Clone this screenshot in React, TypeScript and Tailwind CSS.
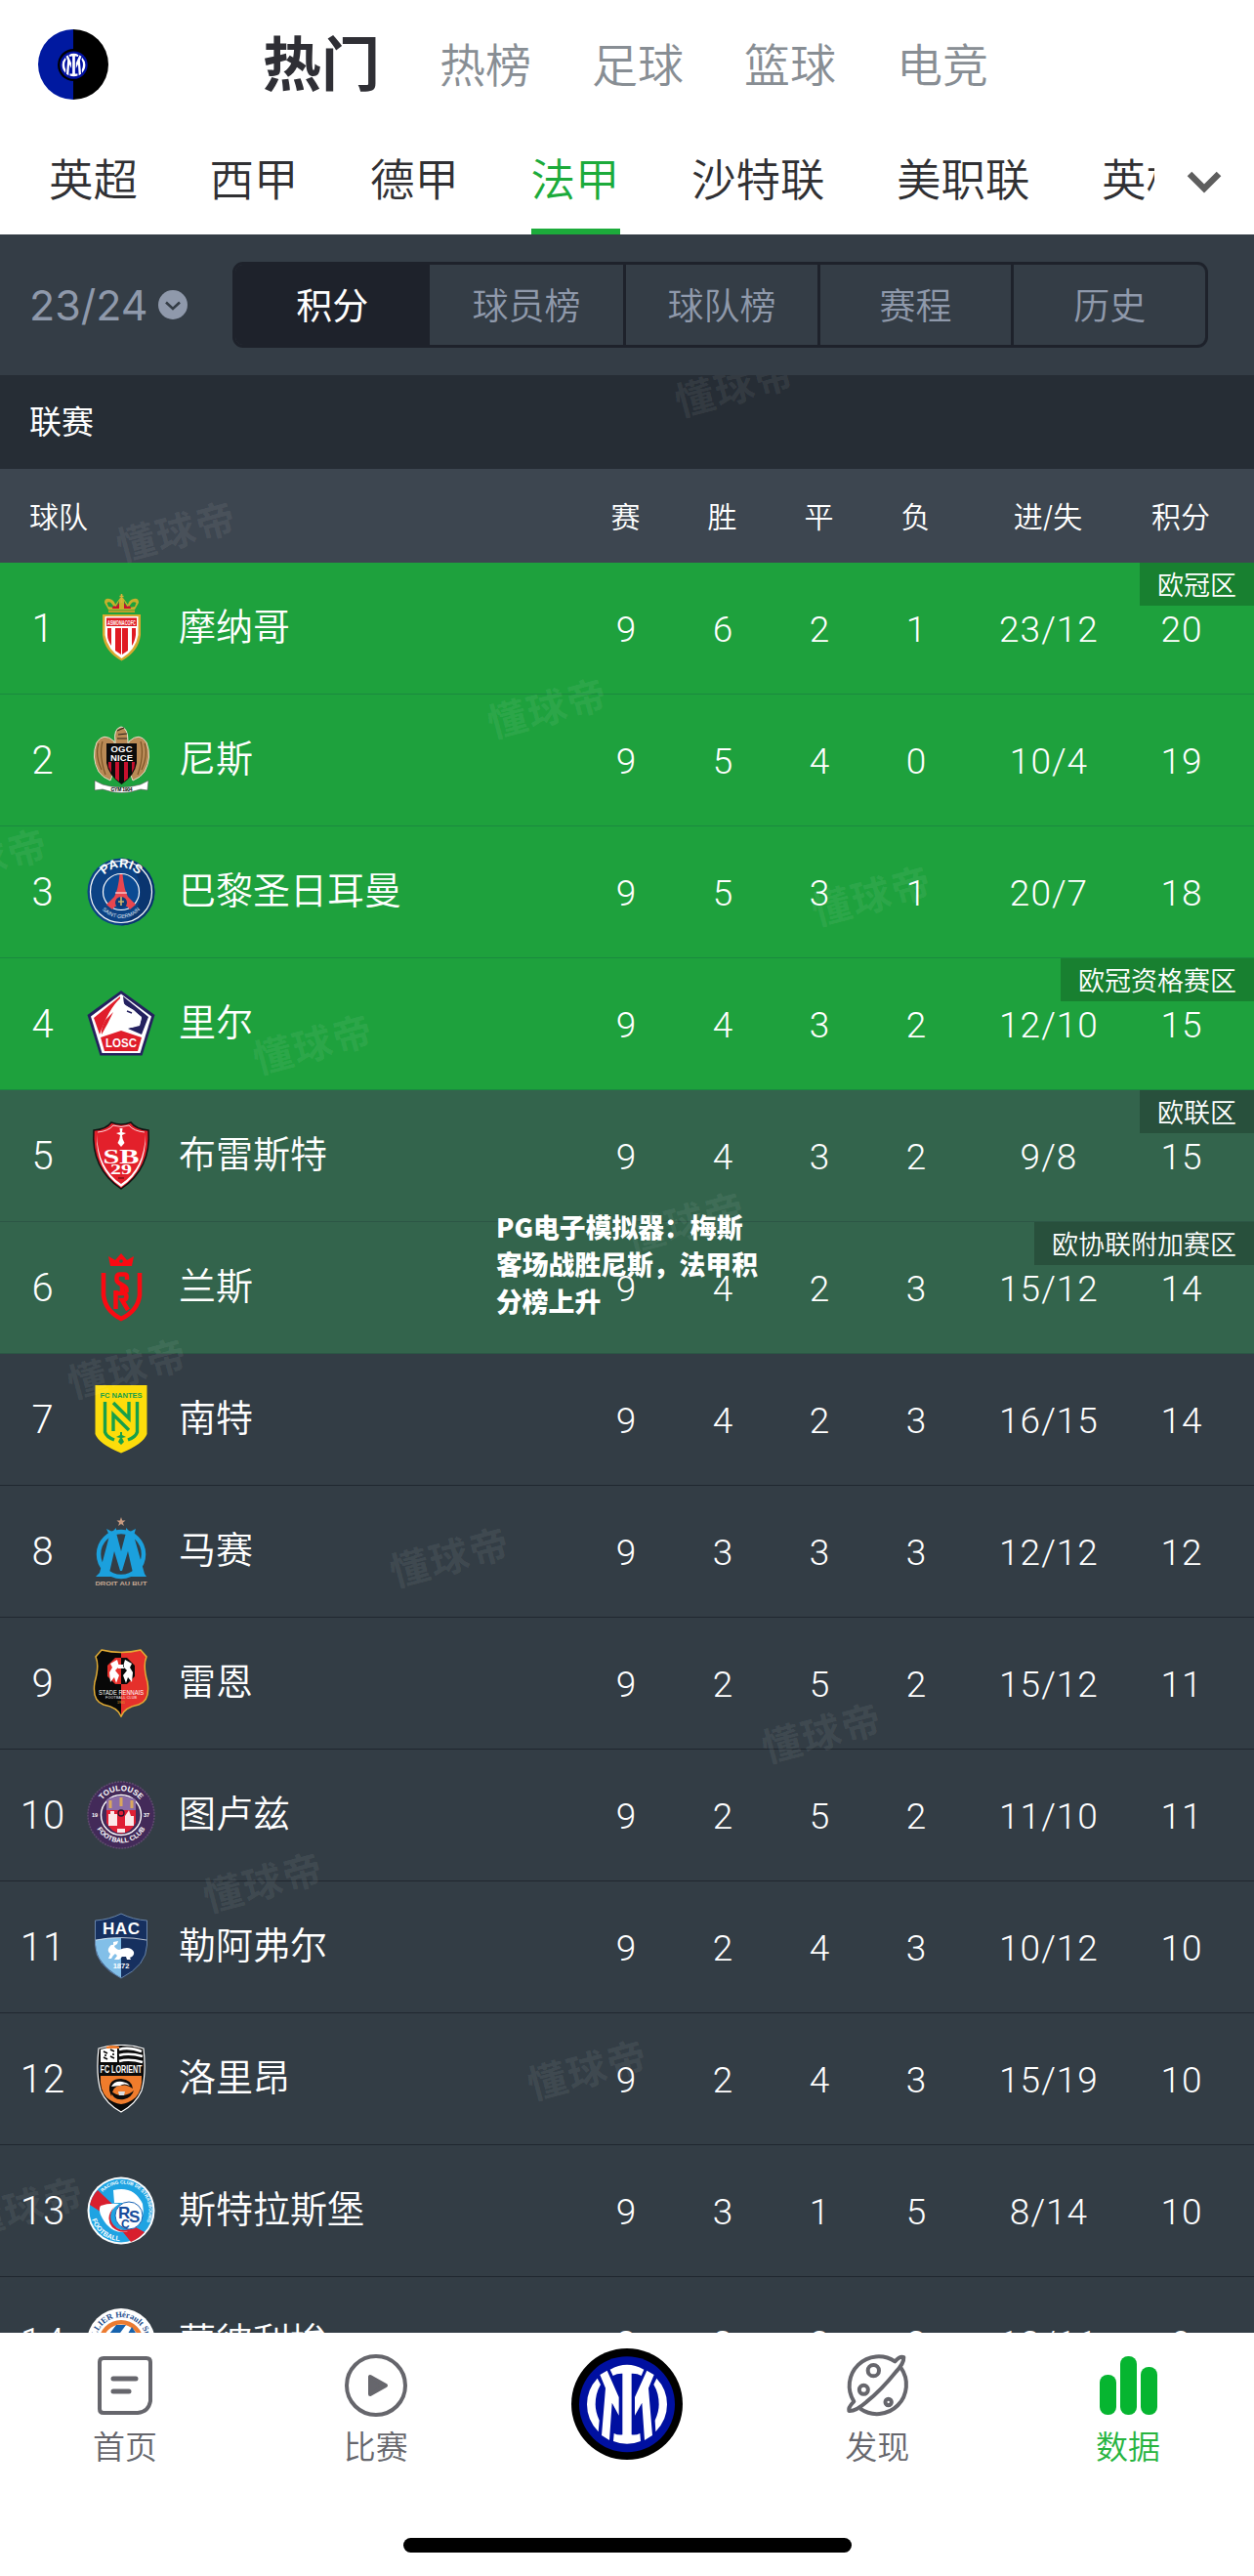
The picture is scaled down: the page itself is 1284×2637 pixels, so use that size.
import type { ReactNode } from "react";

type Team = {
  rank: number;
  name: string;
  stats: string[];
  zone?: string;
  crest: ReactNode;
};

// Inter Milan monogram, shared by the avatar and the tab bar
function InterLogo({ className }: { className?: string }) {
  return (
    <svg viewBox="555 312 342 342" className={className}>
      <circle cx="726" cy="483" r="171" fill="#000" />
      <circle cx="726" cy="484" r="147" fill="#0010a0" />
      <g fill="#fff">
        <path d="M674 377Q726 348 778 377L770 396Q757 388 740 389V577Q754 579 766 573L768 597Q726 614 684 597L686 573Q698 579 712 577V389Q696 388 683 396Z" />
        <path d="M643 393L665 380L701 462V518L680 479L672 594L648 579L660 434Z" />
        <path d="M809 393L787 380L750 462V518L772 479L780 594L804 579L792 434Z" />
        <path d="M635 404Q603 438 603 484Q603 532 638 568L641 533Q629 508 629 484Q629 450 645 423Z" />
        <path d="M817 404Q849 438 849 484Q849 532 814 568L812 533Q824 508 824 484Q824 450 808 423Z" />
      </g>
    </svg>
  );
}

const SANS = "Liberation Sans, sans-serif";

const crests = {
  monaco: (
    <>
      <path d="M22 16L18 9Q18 4 23 5Q28 6 29 11L34 4H37L42 11Q43 6 48 5Q53 4 53 9L49 16Z" fill="#c9b02c" />
      <path d="M22 13L20.500 9Q24 6 28 14ZM29 14L33 7V14ZM38 14V7L42 14ZM43 14Q46 6 50.500 9L49 13Z" fill="#1ea13d" />
      <path d="M26 15Q26 11 30 13L33 9V15ZM45 15Q45 11 41 13L38 9V15Z" fill="#c8102e" />
      <path d="M35.500 0V9M33.500 2.500H37.500" stroke="#d8b23a" strokeWidth="1.600" />
      <path d="M22 16.500H49V19H22Z" fill="#b8a02a" />
      <path d="M16 21H55V42Q53 59 35.500 68.500Q18 59 16 42Z" fill="#d9a92f" />
      <path d="M18.500 23H52.500V42Q50 57 35.500 66Q21 57 18.500 42Z" fill="#fff" />
      <path d="M20 24.500H51V33H20Z" fill="#e01a22" />
      <path d="M21 35H25V53Q21 47 21 42ZM29 35H35V62L29 58ZM36 35H42V58L36 62ZM46 35H50V42Q49 49 46 53Z" fill="#e01a22" />
      <text x="35.500" y="31.500" fontSize="6.500" fontWeight="700" textAnchor="middle" textLength="29" lengthAdjust="spacingAndGlyphs" fill="#fff" fontFamily={SANS}>ASMONACOFC</text>
    </>
  ),
  nice: (
    <>
      <path d="M29 16Q27 3 35 1Q42 2 42 16V20H29Z" fill="#b98a55" stroke="#efe6d8" strokeWidth="1" />
      <path d="M31 5L38 2M32 9L41 8M31 13L41 13" stroke="#2a2118" strokeWidth="1.200" />
      <path d="M28 16Q17 6 10 17Q4 32 12 47Q16 53 24 56L30 40Z" fill="#b98a55" stroke="#e9dcc8" strokeWidth="1" />
      <path d="M43 16Q54 6 61 17Q67 32 59 47Q55 53 47 56L41 40Z" fill="#b98a55" stroke="#e9dcc8" strokeWidth="1" />
      <path d="M12 18Q8 30 15 45M16 16Q12 30 19 50M59 18Q63 30 56 45M55 16Q59 30 52 50" stroke="#7b5427" strokeWidth="1.200" fill="none" />
      <path d="M20 18H51V38Q49 51 35.500 60Q22 51 20 38Z" fill="#0b0b0b" />
      <path d="M22 37H25V48L22 42ZM29 37H33V57L29 54ZM38 37H42V54L38 57ZM46 37H49L48.500 43L46 48Z" fill="#c8102e" />
      <g fill="#fff" fontFamily={SANS} fontWeight="700" textAnchor="middle" fontSize="9.500">
        <text x="35.500" y="27" textLength="22">OGC</text>
        <text x="35.500" y="35.500" textLength="23">NICE</text>
      </g>
      <path d="M8 56L16 60Q35 66 55 60L63 56L62 66L55 65Q35 72 16 65L8 66Z" fill="#fff" stroke="#555" strokeWidth=".6" />
      <text x="35.500" y="67" fontSize="5" fontWeight="700" textAnchor="middle" textLength="22" fontFamily={SANS}>GYM 1904</text>
    </>
  ),
  paris: (
    <>
      <circle cx="35" cy="35" r="34.500" fill="#0c4284" />
      <path d="M35 .5A34.500 34.500 0 0 1 35 69.500A40 40 0 0 0 35 .5Z" fill="#0a356f" />
      <circle cx="35" cy="35" r="31.500" fill="none" stroke="#fff" strokeWidth="1.200" />
      <circle cx="35" cy="35" r="18.500" fill="#0b4a92" stroke="#fff" strokeWidth="1.200" />
      <path d="M33.500 17H36.500Q38 33 42 40L50 48L44 53Q35 42 26 53L20 48L28 40Q32 33 33.500 17Z" fill="#e8464f" />
      <path d="M29 36H41" stroke="#fff" strokeWidth="1" />
      <circle cx="35" cy="46" r="6" fill="#0b3a78" />
      <path d="M35 40V49M32 45H38" stroke="#d3b46a" strokeWidth="1.600" />
      <path id="psg-top" d="M14 23A23.500 23.500 0 0 1 56 23" fill="none" />
      <path id="psg-bottom" d="M12 48A26 26 0 0 0 58 48" fill="none" />
      <text fontSize="13" fontWeight="700" fill="#fff" fontFamily={SANS}>
        <textPath href="#psg-top" startOffset="50%" textAnchor="middle">PARIS</textPath>
      </text>
      <text fontSize="5.500" fill="#dfe7f2" fontFamily={SANS}>
        <textPath href="#psg-bottom" startOffset="50%" textAnchor="middle">SAINT-GERMAIN</textPath>
      </text>
    </>
  ),
  lille: (
    <>
      <path d="M35 1L69.500 26L56.500 67.500H13.500L.5 26Z" fill="#24215f" />
      <path d="M35 4.500L66 27.500L54.500 65H15.500L4 27.500Z" fill="#fff" />
      <path d="M34 7V9Q22 20 13 46L7 29Z" fill="#e01e2b" />
      <path d="M37 7L63 28L56 46L42 40L54 36L56 28L46 20L38 15Z" fill="#24215f" />
      <path d="M35 10L40 17L48 21L56 29L54 37L46 39L36 37L40 42L35 44L18 50Q18 27 35 10Z" fill="#fff" />
      <path d="M19 31Q14 40 15 46Q21 36 27 23Z" fill="#e01e2b" />
      <path d="M41 22L46 24" stroke="#24215f" strokeWidth="1.500" />
      <path d="M35 42L56 49L52 63H18L14 49Z" fill="#e01e2b" />
      <text x="35" y="59" fontSize="12.500" fontWeight="700" fill="#fff" textAnchor="middle" textLength="32" lengthAdjust="spacingAndGlyphs" fontFamily={SANS}>LOSC</text>
    </>
  ),
  brest: (
    <>
      <path d="M7 9Q20 8 25 1Q35 5 45 1Q50 8 63 9Q66 48 35 69Q4 48 7 9Z" fill="#e3202b" stroke="#111" strokeWidth="1.500" />
      <path d="M10 13Q11 48 35 64Q59 48 60 13Q61 50 35 67Q9 50 10 13Z" fill="#fff" />
      <path d="M11 11Q22 10 27 4Q35 7 43 4Q48 10 59 11" fill="none" stroke="#fff" strokeWidth=".8" />
      <path d="M33.500 7H36.500L36 11L40 12L36 14Q36 18 38.500 22L35 26L31.500 22Q34 18 34 14L30 12L34 11Z" fill="#fff" />
      <g fill="#fff" textAnchor="middle" fontFamily="Liberation Serif, serif" fontWeight="700">
        <text x="35" y="43" fontSize="21" textLength="37" lengthAdjust="spacingAndGlyphs">SB</text>
        <text x="35" y="54" fontSize="15" textLength="22" lengthAdjust="spacingAndGlyphs">29</text>
      </g>
      <path d="M32 58H38" stroke="#7d1219" strokeWidth="1.500" />
    </>
  ),
  reims: (
    <>
      <path d="M24 13L22 3L29 7L35 0L41 7L48 3L46 13Z" fill="#fa0a12" />
      <circle cx="35" cy="8" r="1.800" fill="#33644c" />
      <path d="M17 20V43Q19 59 35 67Q52 59 54 43V20" fill="none" stroke="#fa0a12" strokeWidth="4.600" />
      <path d="M41 27V24Q41 21.500 38 21.500H34Q30.500 21.500 30.500 25V27Q30.500 29 33 30.500L38 33.500Q40.500 35 40.500 37V40" fill="none" stroke="#fa0a12" strokeWidth="4.500" />
      <path d="M29.500 57V38M36 33L36 41M31 41H37Q40.500 41 40.500 44.500Q40.500 48 36 48L42 58" fill="none" stroke="#fa0a12" strokeWidth="4.500" />
    </>
  ),
  nantes: (
    <>
      <path d="M8.500 0H61.500V50Q58 60 35 69.500Q12 60 8.500 50Z" fill="#fddc0b" />
      <text x="35" y="13" fontSize="7.500" fontWeight="700" fill="#17a04a" textAnchor="middle" textLength="43" lengthAdjust="spacingAndGlyphs" fontFamily={SANS}>FC NANTES</text>
      <path d="M18.500 17V48Q20 53 28 56M51.500 17V48Q50 53 42 56M27 47V30L43 46M27 18L43 34V17" fill="none" stroke="#17a04a" strokeWidth="3.400" />
      <path d="M34 48H36V51L40 53L36 54L38 58L35 61L32 58L34 54L30 53L34 51Z" fill="#17a04a" />
    </>
  ),
  marseille: (
    <>
      <path d="M35 0L36.200 3.500H39.500L36.900 5.700L37.900 9L35 7L32.100 9L33.100 5.700L30.500 3.500H33.800Z" fill="#c99b80" />
      <circle cx="35" cy="38" r="23" fill="none" stroke="#1ba0dd" strokeWidth="4.500" />
      <path d="M20 12L26 15L30 11V16L35 35L40 16V11L44 15L50 12L48 19L59 58L61 61H44L47 57L42 35L36 55H34L28 35L23 57L26 61H9L13 57L23 19Z" fill="#1ba0dd" />
      <text x="35" y="69.500" fontSize="5.800" fontWeight="700" fill="#c9a994" textAnchor="middle" textLength="53" lengthAdjust="spacingAndGlyphs" fontFamily={SANS}>DROIT AU BUT</text>
    </>
  ),
  rennes: (
    <>
      <path d="M15 1Q35 6 55 1L61 8Q57 17 62 34Q65 53 53 57Q38 60 35 69Q32 60 17 57Q5 53 8 34Q13 17 9 8Z" fill="#080808" />
      <path d="M35 3Q46 3 55 1L61 8Q57 17 62 34Q65 53 53 57Q38 60 35 69Z" fill="#e5302b" />
      <path d="M15 1Q35 6 55 1L61 8Q57 17 62 34Q65 53 53 57Q38 60 35 69Q32 60 17 57Q5 53 8 34Q13 17 9 8Z" fill="none" stroke="#e4ad34" strokeWidth="1.500" />
      <path d="M35 9H29L21 17V28L29 36H35Z" fill="#e5302b" />
      <path d="M35 9H41L49 17V28L41 36H35Z" fill="#080808" />
      <path d="M31 11L33 18L29 22L33 27L30 35L28 29L24 34L23 24L26 19L24 15ZM39 11L37 18L41 22L37 27L40 35L42 29L46 34L47 24L44 19L46 15ZM32 16H38V20H32Z" fill="#fff" />
      <g fill="#fff" textAnchor="middle" fontFamily={SANS}>
        <text x="35" y="46.500" fontSize="6.500" textLength="46" lengthAdjust="spacingAndGlyphs">STADE RENNAIS</text>
        <text x="35" y="51" fontSize="3.600" textLength="32">FOOTBALL CLUB</text>
        <text x="35" y="56" fontSize="3.500" fill="#e4ad34">1901</text>
      </g>
    </>
  ),
  toulouse: (
    <>
      <circle cx="35" cy="35" r="34" fill="#432a59" stroke="#604a70" strokeWidth="1.500" strokeDasharray="2 1" />
      <circle cx="35" cy="35" r="20.500" fill="#432a59" stroke="#fff" strokeWidth="1.400" />
      <path d="M20 19Q35 12 50 19V30H20Z" fill="#8a6ca6" />
      <path d="M20 30H50V43Q45 53 35 54Q25 53 20 43Z" fill="#e01f35" />
      <path d="M22 46V34H24V31H28V34H31V46ZM39 46V36L43 30L45 36H48V46ZM31 49H39V53H31Z" fill="#fbe9ea" />
      <path d="M24 20V28M35 17V26M46 20V28" stroke="#d9a75d" strokeWidth="3" />
      <circle cx="35" cy="33" r="3" fill="#e01f35" stroke="#26132e" strokeWidth="1.300" />
      <path id="tfc-top" d="M14 22A24.500 24.500 0 0 1 56 22" fill="none" />
      <path id="tfc-bottom" d="M8 44A28.500 28.500 0 0 0 62 44" fill="none" />
      <g fill="#fff" fontFamily={SANS} fontWeight="700">
        <text fontSize="8">
          <textPath href="#tfc-top" startOffset="50%" textAnchor="middle">TOULOUSE</textPath>
        </text>
        <text fontSize="7">
          <textPath href="#tfc-bottom" startOffset="50%" textAnchor="middle">FOOTBALL CLUB</textPath>
        </text>
        <text x="5" y="36.500" fontSize="5.500">19</text>
        <text x="58" y="36.500" fontSize="5.500">37</text>
      </g>
    </>
  ),
  lehavre: (
    <>
      <path d="M8.500 8Q23 7 35 1Q47 7 61.500 8V33Q61 54 35 67Q9 54 8.500 33Z" fill="#16305f" stroke="#6f8db3" strokeWidth=".9" />
      <path d="M9 28Q22 25 35 26V66.500Q10 53 9 33Z" fill="#82bfe8" />
      <path d="M9 28Q35 23 61 28" fill="none" stroke="#fff" strokeWidth=".7" />
      <text x="35" y="22" fontSize="17" fontWeight="700" fill="#fff" textAnchor="middle" textLength="38" fontFamily={SANS}>HAC</text>
      <path d="M27 30L32 29L31 32L28 34Q29 37 33 38Q44 33 48 40Q49 44 44 46L45 48H41L40 45H36L33 48H28L31 44L29 42Q26 44 25 47H22L24 42Q20 39 23 35Q25 32 27 33Z" fill="#fff" />
      <text x="35" y="57" fontSize="7.500" fontWeight="700" fill="#fff" textAnchor="middle" fontFamily={SANS}>1872</text>
    </>
  ),
  lorient: (
    <>
      <path d="M12 4Q35 -3 58 4Q61 30 56 47Q50 61 35 69Q20 61 14 47Q9 30 12 4Z" fill="#0b0b0b" stroke="#fff" strokeWidth="1.200" />
      <path d="M14 5Q23 2 31 2V18H14Z" fill="#fff" />
      <path d="M17 7L21 9M24 5L28 7M17 13L21 15M24 12L28 14M19 10V12M27 9V11" stroke="#0b0b0b" strokeWidth="1.600" />
      <path d="M20 2Q26 0 33 2V4H20Z" fill="#f07c2c" />
      <path d="M33 5Q43 2 56 7M33 11Q43 8 57 12M33 17Q43 14 57 18" stroke="#fff" strokeWidth="2.600" fill="none" />
      <text x="35" y="29" fontSize="10" fontWeight="700" fill="#fff" textAnchor="middle" textLength="43" lengthAdjust="spacingAndGlyphs" fontFamily={SANS}>FC LORIENT</text>
      <path d="M14 32H56Q57 46 50 54Q43 60 35 61Q27 60 20 54Q13 46 14 32Z" fill="#f07c2c" />
      <path d="M23 47Q22 35 35 35Q46 36 47 45Q40 40 35 42Q27 41 25 53Z" fill="#0b0b0b" />
      <path d="M25 43Q28 37 36 38Q42 39 44 42Q38 39 34 42Z" fill="#fff" />
      <path d="M24 47Q27 58 38 56Q46 54 48 47Q44 51 37 52Q29 52 24 47Z" fill="#0b0b0b" />
      <path d="M32 48H39L38 52H33Z" fill="#d9dee2" />
    </>
  ),
  strasbourg: (
    <>
      <circle cx="35" cy="35" r="34.500" fill="#fff" />
      <circle cx="35" cy="35" r="32.500" fill="#1fa3e2" />
      <path d="M11 14L29 31L20 40L3 29Q5 20 11 14Z" fill="#d81f2e" />
      <path d="M48 51L59 57Q53 64 45 67L37 57Z" fill="#d81f2e" />
      <path d="M27 14Q48 9 57 28Q60 42 51 50L42 27L28 27Z" fill="#fff" />
      <path d="M33 28Q23 34 23 44Q26 54 42 56Q30 60 20 49Q10 36 14 30Q22 27 33 28Z" fill="#fff" />
      <path d="M28 31Q19 44 31 53Q38 57 46 53Q37 61 26 52Q18 42 28 31Z" fill="#d81f2e" />
      <circle cx="43" cy="40" r="14" fill="#fff" stroke="#1763b5" strokeWidth="1" />
      <g fill="#174b9b" fontWeight="700" fontFamily={SANS} fontSize="17">
        <text x="32" y="43">R</text>
        <text x="43" y="47">S</text>
        <text x="35" y="53" fontSize="12">C</text>
      </g>
      <path id="rcs-top" d="M16 16A26.500 26.500 0 0 1 56 54" fill="none" />
      <path id="rcs-bottom" d="M5 44A31 31 0 0 0 34 66" fill="none" />
      <g fill="#fff" fontWeight="700" fontFamily={SANS}>
        <text fontSize="4.800">
          <textPath href="#rcs-top">RACING CLUB DE STRASBOURG</textPath>
        </text>
        <text fontSize="7">
          <textPath href="#rcs-bottom">FOOTBALL</textPath>
        </text>
      </g>
    </>
  ),
  montpellier: (
    <>
      <circle cx="35" cy="35" r="35" fill="#fff" />
      <circle cx="35" cy="35" r="23" fill="#eb7b31" />
      <circle cx="35" cy="35" r="18.500" fill="#fff" />
      <path d="M20 30L30 17H40L26 36ZM36 36L46 19L50 25V36Z" fill="#1662ad" />
      <path id="mhsc-top" d="M9 35A26 26 0 0 1 61 35" fill="none" />
      <text fontSize="8.500" fontWeight="700" fill="#1d4e8c" fontFamily="Liberation Serif, serif">
        <textPath href="#mhsc-top" startOffset="50%" textAnchor="middle">PELLIER Hérault Sport</textPath>
      </text>
    </>
  ),
};

const teams: Team[] = [
  { rank: 1, name: "摩纳哥", stats: ["9", "6", "2", "1", "23/12", "20"], zone: "欧冠区", crest: crests.monaco },
  { rank: 2, name: "尼斯", stats: ["9", "5", "4", "0", "10/4", "19"], crest: crests.nice },
  { rank: 3, name: "巴黎圣日耳曼", stats: ["9", "5", "3", "1", "20/7", "18"], crest: crests.paris },
  { rank: 4, name: "里尔", stats: ["9", "4", "3", "2", "12/10", "15"], zone: "欧冠资格赛区", crest: crests.lille },
  { rank: 5, name: "布雷斯特", stats: ["9", "4", "3", "2", "9/8", "15"], zone: "欧联区", crest: crests.brest },
  { rank: 6, name: "兰斯", stats: ["9", "4", "2", "3", "15/12", "14"], zone: "欧协联附加赛区", crest: crests.reims },
  { rank: 7, name: "南特", stats: ["9", "4", "2", "3", "16/15", "14"], crest: crests.nantes },
  { rank: 8, name: "马赛", stats: ["9", "3", "3", "3", "12/12", "12"], crest: crests.marseille },
  { rank: 9, name: "雷恩", stats: ["9", "2", "5", "2", "15/12", "11"], crest: crests.rennes },
  { rank: 10, name: "图卢兹", stats: ["9", "2", "5", "2", "11/10", "11"], crest: crests.toulouse },
  { rank: 11, name: "勒阿弗尔", stats: ["9", "2", "4", "3", "10/12", "10"], crest: crests.lehavre },
  { rank: 12, name: "洛里昂", stats: ["9", "2", "4", "3", "15/19", "10"], crest: crests.lorient },
  { rank: 13, name: "斯特拉斯堡", stats: ["9", "3", "1", "5", "8/14", "10"], crest: crests.strasbourg },
  { rank: 14, name: "蒙彼利埃", stats: ["8", "2", "3", "3", "13/11", "9"], crest: crests.montpellier },
];

const channels = ["热榜", "足球", "篮球", "电竞"];
const leagues = ["英超", "西甲", "德甲", "法甲", "沙特联", "美职联", "英格兰"];
const segments = ["积分", "球员榜", "球队榜", "赛程", "历史"];
const columns = ["赛", "胜", "平", "负", "进/失", "积分"];

// centre points of the brand watermark, relative to the table
const watermarks = [
  [753, 13], [181, 161], [561, 342], [-12, 496], [893, 534], [321, 686], [702, 868],
  [131, 1018], [461, 1211], [842, 1391], [270, 1544], [602, 1736], [25, 1876],
];

function rowColor(rank: number) {
  if (rank <= 4) return "bg-[#1ea13d] border-[#1a893f]";
  if (rank <= 6) return "bg-[#33644c] border-[#2c5645]";
  return "bg-[#333d45] border-[#20272f]";
}

function Cells({ items, className }: { items: string[]; className: string }) {
  return (
    <div className={`mr-[25px] ml-auto grid grid-cols-[99px_99px_99px_99px_172px_100px] text-center ${className}`}>
      {items.map((item, i) => (
        <span key={i}>{item}</span>
      ))}
    </div>
  );
}

function TeamRow({ team }: { team: Team }) {
  return (
    <div className={`relative flex h-[135px] shrink-0 items-center border-b text-white ${rowColor(team.rank)}`}>
      <span className="relative top-px w-[88px] text-center font-[family-name:Roboto,sans-serif] text-[40px] font-light tracking-[1px]">
        {team.rank}
      </span>
      <svg viewBox="0 0 70 70" className="ml-px size-[70px]">
        {team.crest}
      </svg>
      <span className="relative -top-[2px] ml-[24px] text-[38px] leading-none font-[350]">{team.name}</span>
      <Cells
        items={team.stats}
        className="relative top-[2px] left-px font-[family-name:Roboto,sans-serif] text-[37px] font-light tracking-[1px]"
      />
      {team.zone && (
        <span className="absolute top-0 right-0 h-[44px] bg-black/20 px-[18px] text-[27px] leading-[47px] font-[350]">
          {team.zone}
        </span>
      )}
    </div>
  );
}

function Header() {
  return (
    <header className="h-[240px] bg-white">
      <div className="flex h-[132px] items-center">
        <div className="ml-[39px] flex size-[72px] items-center justify-center rounded-full bg-[linear-gradient(90deg,#0019a0_50%,#000_50%)]">
          <InterLogo className="size-[33px]" />
        </div>
        <span className="ml-[158px] text-[60px] leading-none font-bold text-[#2f2f35]">热门</span>
        <nav className="ml-[61px] flex gap-[62px] text-[47px] leading-none font-[350] text-[#888e94]">
          {channels.map((c) => (
            <span key={c}>{c}</span>
          ))}
        </nav>
      </div>
      <div className="flex h-[108px] items-center">
        <nav className="ml-[50px] flex h-full w-[1132px] gap-[73.500px] overflow-hidden text-[45.500px] leading-[105px] font-[350] whitespace-nowrap text-[#303033]">
          {leagues.map((l) => (
            <span key={l} className={l === "法甲" ? "h-full border-b-6 border-[#1cab3b] text-[#1cab3b]" : ""}>
              {l}
            </span>
          ))}
        </nav>
        <svg viewBox="0 0 36 24" className="ml-[33px] h-6 w-9">
          <path d="M3 4L18 19L33 4" fill="none" stroke="#5e5e5e" strokeWidth="6.500" />
        </svg>
      </div>
    </header>
  );
}

function Toolbar() {
  return (
    <div className="flex h-[144px] shrink-0 items-center bg-[#343d46] text-[#8f99ab]">
      <div className="flex w-[238px] items-center gap-[10px] pl-[30px] text-[43px]">
        23/24
        <svg viewBox="0 0 30 30" className="size-[30px]">
          <circle cx="15" cy="15" r="15" fill="#8f99ab" />
          <path d="M8 12.500L15 19L22 12.500" fill="none" stroke="#343d46" strokeWidth="2.600" />
        </svg>
      </div>
      <div className="grid h-[88px] w-[999px] grid-cols-5 overflow-hidden rounded-[11px] border-3 border-[#1e222b] text-center text-[37px] leading-[85px] font-[350]">
        {segments.map((s, i) => (
          <span
            key={s}
            className={i === 0 ? "bg-[#1e222b] font-normal text-white" : i === 1 ? "" : "border-l-3 border-[#1e222b]"}
          >
            {s}
          </span>
        ))}
      </div>
    </div>
  );
}

function Standings() {
  return (
    <main className="relative flex h-[2004px] flex-col overflow-hidden bg-[#333d45]">
      <div className="h-[96px] shrink-0 bg-[#262d35] pl-[30px] text-[33px] leading-[97px] text-white">联赛</div>
      <div className="flex h-[96px] shrink-0 items-center bg-[#3d4650] text-[30px] font-[350] text-white">
        <span className="relative top-px ml-[30px]">球队</span>
        <Cells items={columns} className="relative top-px" />
      </div>
      {teams.map((t) => (
        <TeamRow key={t.rank} team={t} />
      ))}
      {watermarks.map(([x, y]) => (
        <span
          key={`${x}-${y}`}
          className="pointer-events-none absolute -translate-x-1/2 -translate-y-1/2 -rotate-15 text-[40px] leading-none font-bold tracking-[2px] whitespace-nowrap text-white/8"
          style={{ left: x, top: y }}
        >
          懂球帝
        </span>
      ))}
      <p className="absolute top-[853px] left-[508px] w-[275px] font-[family-name:'Noto_Sans_CJK_SC',sans-serif] text-[26.800px] leading-[38px] font-black text-white">
        PG电子模拟器：梅斯
        <br />
        客场战胜尼斯，法甲积
        <br />
        分榜上升
      </p>
    </main>
  );
}

const tabs = [
  {
    label: "首页",
    icon: (
      <svg viewBox="0 0 64 64" className="size-16" fill="none" stroke="#66666c" strokeWidth="4">
        <path d="M8 4H52Q56 4 56 8V48Q54 59 43 60H8Q4 60 4 56V8Q4 4 8 4Z" transform="translate(2 0)" />
        <path d="M20 25H43M20 38H36" strokeWidth="5" strokeLinecap="round" />
      </svg>
    ),
  },
  {
    label: "比赛",
    icon: (
      <svg viewBox="0 0 64 64" className="size-16">
        <circle cx="32" cy="32" r="30" fill="none" stroke="#66666c" strokeWidth="4" />
        <path d="M26 23V41L42 32Z" fill="#66666c" stroke="#66666c" strokeWidth="4" strokeLinejoin="round" />
      </svg>
    ),
  },
  { label: "", icon: <InterLogo className="size-[114px]" /> },
  {
    label: "发现",
    icon: (
      <svg viewBox="84 330 192 192" className="size-16 overflow-visible" fill="none" stroke="#66666c" strokeWidth="12" strokeLinejoin="round">
        <path d="M106 475A90 90 0 0 1 232 352Q248 334 259 339Q260 358 235 384Q190 440 145 476Q110 506 91 504Q87 494 106 475Z" />
        <path d="M250 371A90 90 0 0 1 125 497" />
        <circle cx="166" cy="380" r="17" />
        <circle cx="136" cy="439" r="13.500" />
        <circle cx="212" cy="477" r="9.500" />
      </svg>
    ),
  },
  {
    label: "数据",
    active: true,
    icon: (
      <svg viewBox="0 0 64 64" className="size-16" fill="#06b530">
        <rect x="2" y="21" width="17" height="41" rx="8" />
        <rect x="23" y="2" width="17" height="60" rx="8" />
        <rect x="44" y="13" width="17" height="49" rx="8" />
      </svg>
    ),
  },
];

function TabBar() {
  return (
    <footer className="flex h-[249px] flex-col items-center bg-white">
      <nav className="grid h-[210px] w-full grid-cols-5">
        {tabs.map((tab, i) => (
          <div
            key={i}
            className={`flex flex-col items-center text-[33px] leading-none font-[350] ${tab.label ? "pt-[22px]" : "pt-4"} ${tab.active ? "text-[#27b440]" : "text-[#66666c]"}`}
          >
            {tab.icon}
            <span className="mt-[15px] -ml-px">{tab.label}</span>
          </div>
        ))}
      </nav>
      <div className="h-[15px] w-[459px] rounded-full bg-black" />
    </footer>
  );
}

export default function App() {
  return (
    <div className="w-[1284px] overflow-hidden bg-white font-[family-name:Inter,'Noto_Sans_CJK_SC',sans-serif]">
      <Header />
      <Toolbar />
      <Standings />
      <TabBar />
    </div>
  );
}
